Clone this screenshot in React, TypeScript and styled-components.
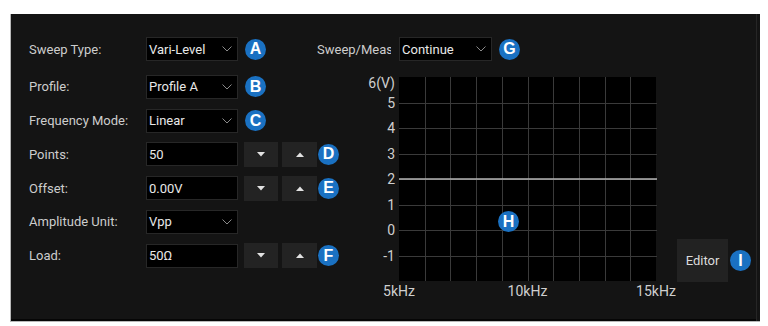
import React from "react";
import styled, { createGlobalStyle } from "styled-components";

const GlobalStyle = createGlobalStyle`
  html, body {
    margin: 0;
    padding: 0;
    background: #ffffff;
  }
  * {
    box-sizing: border-box;
  }
`;

const FONT = `Roboto, "Liberation Sans", Arial, sans-serif`;
const BLUE = "#1a71c2";

const Frame = styled.div`
  margin: 14px 0 0 10px;
  width: 750px;
  height: 308px;
  background: #141414;
  border-left: 1px solid #b8b8b8;
  border-bottom: 1px solid #b8b8b8;
  box-shadow: inset -3px 0 0 #141414, inset -4px 0 0 #262626,
    inset 0 -2px 0 #060606;
  padding: 23px 0 0 18px;
  display: flex;
  font-family: ${FONT};
  font-size: 13px;
`;

const Form = styled.div`
  width: 288px;
  flex-shrink: 0;
  display: flex;
  flex-direction: column;
  gap: 9.8px;
`;

const Row = styled.div<{ $first?: boolean }>`
  display: flex;
  align-items: center;
  height: 24px;
  margin-bottom: ${(p) => (p.$first ? "4px" : "0")};
`;

const Label = styled.div`
  width: 117px;
  flex-shrink: 0;
  color: #cdcdcd;
  white-space: nowrap;
`;

const Field = styled.div<{ $width?: number }>`
  width: ${(p) => p.$width ?? 92}px;
  flex-shrink: 0;
  height: 24px;
  background: #000;
  border: 1px solid #272727;
  padding: 0 5px 0 2px;
  display: flex;
  align-items: center;
  justify-content: space-between;
  color: #e8e8e8;
  white-space: nowrap;
`;

const Badge = styled.div<{ $gap?: number }>`
  width: 21px;
  height: 21px;
  border-radius: 50%;
  background: ${BLUE};
  color: #fff;
  font-family: "Liberation Sans", Arial, sans-serif;
  font-weight: 700;
  font-size: 16px;
  display: flex;
  align-items: center;
  justify-content: center;
  margin-left: ${(p) => p.$gap ?? 7}px;
  flex-shrink: 0;
`;

const StepButton = styled.div<{ $gap: number; $width: number }>`
  width: ${(p) => p.$width}px;
  flex-shrink: 0;
  height: 25px;
  margin-left: ${(p) => p.$gap}px;
  background: #232323;
  display: flex;
  align-items: center;
  justify-content: center;
`;

const Right = styled.div`
  display: flex;
  flex-direction: column;
`;

const SweepLabel = styled.div`
  width: 74px;
  flex-shrink: 0;
  margin-right: 8px;
  overflow: hidden;
  white-space: nowrap;
  color: #cdcdcd;
`;

const ChartRow = styled.div`
  display: flex;
  margin-top: 9px;
`;

const ChartWrap = styled.div`
  position: relative;
  width: 360px;
  height: 232px;
  flex-shrink: 0;
`;

const Marker = styled(Badge)`
  position: absolute;
  left: 181px;
  top: 141px;
  margin: 0;
`;

const EditorGroup = styled.div`
  display: flex;
  align-items: center;
  margin-top: 169px;
  align-self: flex-start;
`;

const EditorButton = styled.div`
  width: 51px;
  height: 43px;
  background: #222222;
  color: #dcdcdc;
  display: flex;
  align-items: center;
  justify-content: center;
`;

const Chevron = () => (
  <svg width="10" height="6" viewBox="0 0 10 6">
    <polyline points="0.5,0.5 5,5 9.5,0.5" fill="none" stroke="#8a8a8a" strokeWidth="1" />
  </svg>
);

const Arrow = ({ up }: { up?: boolean }) => (
  <svg width="8" height="5" viewBox="0 0 8 5">
    <polygon points={up ? "0,5 8,5 4,0.5" : "0,0 8,0 4,4.5"} fill="#e2e2e2" />
  </svg>
);

const Select = ({ value, width }: { value: string; width?: number }) => (
  <Field $width={width}>
    <span>{value}</span>
    <Chevron />
  </Field>
);

const Steppers = () => (
  <>
    <StepButton $gap={6} $width={34}>
      <Arrow />
    </StepButton>
    <StepButton $gap={4} $width={35}>
      <Arrow up />
    </StepButton>
  </>
);

// plot geometry inside the chart svg
const X0 = 82;
const X1 = 339;
const Y0 = 7;
const Y1 = 211;
const colW = (X1 - X0) / 10;
const rowH = (Y1 - Y0) / 8;
const yLabels = ["6(V)", "5", "4", "3", "2", "1", "0", "-1"];

const Chart = () => (
  <svg width="360" height="232" viewBox="0 0 360 232" style={{ display: "block" }}>
    <rect x={X0} y={Y0} width={X1 - X0} height={Y1 - Y0} fill="#000" />
    {Array.from({ length: 9 }, (_, i) => {
      const x = Math.round(X0 + (i + 1) * colW) + 0.5;
      return (
        <line key={"v" + i} x1={x} y1={Y0} x2={x} y2={Y1} stroke="#3a3a3a" strokeWidth="1" />
      );
    })}
    {Array.from({ length: 7 }, (_, j) => {
      const y = Math.round(Y0 + (j + 1) * rowH) + 0.5;
      return (
        <line key={"h" + j} x1={X0} y1={y} x2={X1 + 1} y2={y} stroke="#3a3a3a" strokeWidth="1" />
      );
    })}
    <line
      x1={X0}
      y1={Y0 + 4 * rowH}
      x2={X1 + 1}
      y2={Y0 + 4 * rowH}
      stroke="#b4b4b4"
      strokeWidth="1.6"
    />
    <g fontFamily={FONT} fontSize="14" fill="#cfcfcf">
      {yLabels.map((t, j) => (
        <text
          key={t}
          x={X0 - 4}
          y={j === 0 ? Y0 + 6 : Y0 + j * rowH}
          textAnchor="end"
          dominantBaseline="central"
        >
          {t}
        </text>
      ))}
      <text x={X0} y={221} textAnchor="middle" dominantBaseline="central">
        5kHz
      </text>
      <text x={(X0 + X1) / 2} y={221} textAnchor="middle" dominantBaseline="central">
        10kHz
      </text>
      <text x={X1} y={221} textAnchor="middle" dominantBaseline="central">
        15kHz
      </text>
    </g>
  </svg>
);

export default function App() {
  return (
    <>
      <GlobalStyle />
      <Frame>
        <Form>
          <Row $first>
            <Label>Sweep Type:</Label>
            <Select value="Vari-Level" />
            <Badge>A</Badge>
          </Row>
          <Row>
            <Label>Profile:</Label>
            <Select value="Profile A" />
            <Badge>B</Badge>
          </Row>
          <Row>
            <Label>Frequency Mode:</Label>
            <Select value="Linear" />
            <Badge>C</Badge>
          </Row>
          <Row>
            <Label>Points:</Label>
            <Field>50</Field>
            <Steppers />
            <Badge $gap={1}>D</Badge>
          </Row>
          <Row>
            <Label>Offset:</Label>
            <Field>0.00V</Field>
            <Steppers />
            <Badge $gap={1}>E</Badge>
          </Row>
          <Row>
            <Label>Amplitude Unit:</Label>
            <Select value="Vpp" />
          </Row>
          <Row>
            <Label>Load:</Label>
            <Field>50Ω</Field>
            <Steppers />
            <Badge $gap={1}>F</Badge>
          </Row>
        </Form>
        <Right>
          <Row>
            <SweepLabel>Sweep/Measure:</SweepLabel>
            <Select value="Continue" width={93} />
            <Badge>G</Badge>
          </Row>
          <ChartRow>
            <ChartWrap>
              <Chart />
              <Marker>H</Marker>
            </ChartWrap>
            <EditorGroup>
              <EditorButton>Editor</EditorButton>
              <Badge $gap={2}>I</Badge>
            </EditorGroup>
          </ChartRow>
        </Right>
      </Frame>
    </>
  );
}
